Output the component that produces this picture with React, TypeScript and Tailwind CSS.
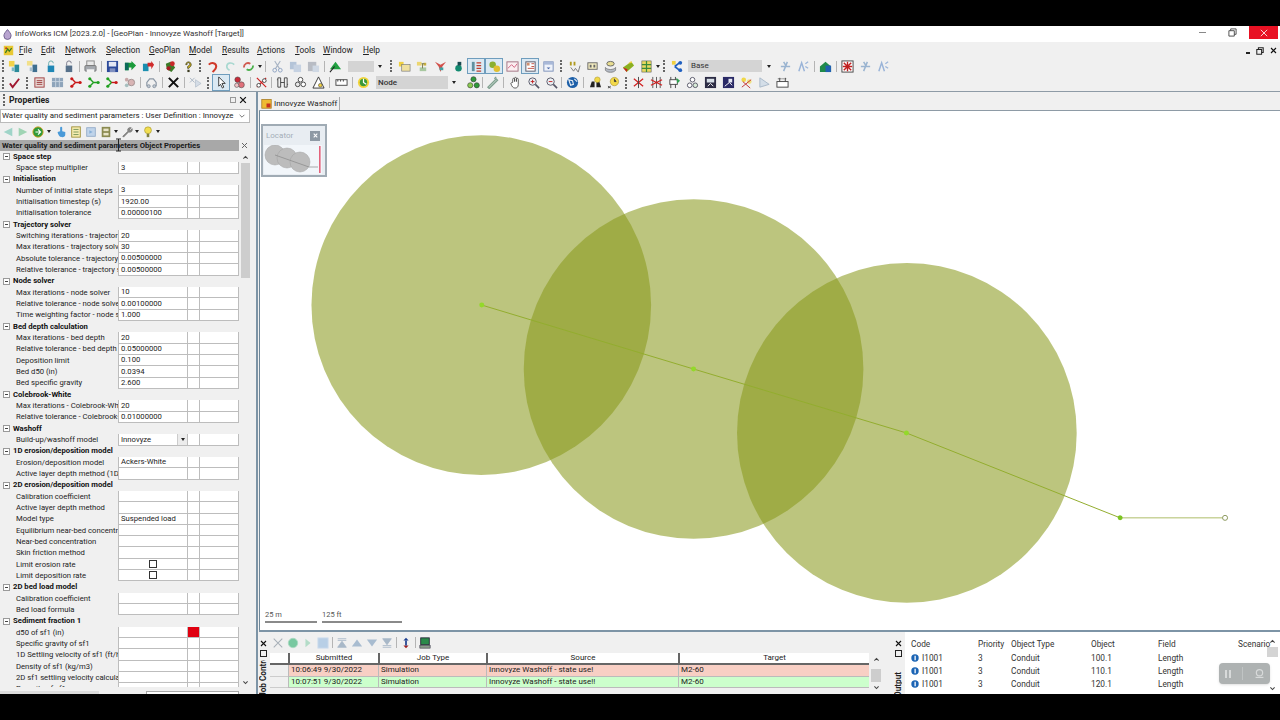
import type { ReactNode } from "react";

// toolbar glyphs, all drawn in a 14x14 box
const glyphs: Record<string, ReactNode> = {
  app: (<><rect x="1" y="1" width="12" height="12" fill="#e8c832" /><path d="M3 10l3-5 2 3 3-4" stroke="#3a7a20" strokeWidth="1.6" fill="none" /><circle cx="4" cy="4" r="1.2" fill="#c03020" /></>),
  new1: (<><rect x="1" y="1" width="6" height="6" fill="#f2d24a" /><rect x="7" y="5" width="5" height="8" fill="#2a8a9a" /><rect x="4" y="8" width="3" height="4" fill="#7ab8c4" /></>),
  new2: (<><rect x="1" y="1" width="6" height="5" fill="#f2e08a" /><rect x="7" y="5" width="5" height="8" fill="#3f6f8f" /><rect x="4" y="8" width="3" height="4" fill="#a8c0cc" /></>),
  lock1: (<><path d="M5 6V3.5a2.5 2.5 0 0 1 5 0" stroke="#6aa" fill="none" /><rect x="4" y="6" width="7" height="7" fill="#1f87b5" /></>),
  lock2: (<><path d="M5 6V3.5a2.5 2.5 0 0 1 5 0" stroke="#778" fill="none" /><rect x="4" y="6" width="7" height="7" fill="#56708a" /></>),
  print: (<><rect x="3" y="1" width="8" height="5" fill="#e8e8e8" stroke="#888" /><rect x="1" y="6" width="12" height="6" rx="1" fill="#a4a8ae" stroke="#777" /><rect x="3" y="10" width="8" height="3" fill="#f4f4f4" /></>),
  save: (<><rect x="1" y="1" width="12" height="12" fill="#2c4a9a" /><rect x="3" y="2" width="8" height="5" fill="#e4e8f4" /><rect x="4" y="9" width="6" height="4" fill="#8090c0" /></>),
  arrowG: (<><path d="M1 3h7V1l5 5-5 5V8H5v3H1z" fill="#1a9a3a" /><rect x="1" y="3" width="4" height="8" fill="#0d6a5a" /></>),
  arrowR: (<><rect x="1" y="4" width="6" height="8" fill="#1b8fb0" /><path d="M6 3h4V1l3 4-3 5V7H6z" fill="#d02a2a" /></>),
  bug: (<><path d="M2 4l5-2 5 6-4 5-5-3z" fill="#3c7a28" /><circle cx="9" cy="4" r="2.6" fill="#c8282a" /><circle cx="5" cy="9" r="2.2" fill="#a81c24" /></>),
  help: (<><path d="M4 5a3 3 0 1 1 4.500 2.600L7.500 9H6V7l2-1.500A1.500 1.500 0 1 0 5.500 5z" fill="#c9b020" stroke="#3a3a20" strokeWidth=".7" /><rect x="5.800" y="10.500" width="2.400" height="2.500" fill="#3a3a20" /></>),
  undo: (<path d="M3 5c3-3 8-2 8 2 0 3-2 4-4 6" stroke="#d03a2a" strokeWidth="2.200" fill="none" />),
  redo: (<path d="M11 5C8 2 3 3 3 7c0 2 1 3 3 4" stroke="#a8d8d0" strokeWidth="1.800" fill="none" />),
  refresh: (<><path d="M2 8c0-4 4-6 7-4" stroke="#d05a50" strokeWidth="2" fill="none" /><path d="M12 6c0 4-4 6-7 4" stroke="#4ab04a" strokeWidth="2" fill="none" /></>),
  cut: (<><path d="M4 1l5 8M10 1L5 9" stroke="#a8b4c4" strokeWidth="1.200" /><circle cx="4" cy="11" r="2" fill="none" stroke="#8aa0c0" /><circle cx="10" cy="11" r="2" fill="none" stroke="#8aa0c0" /></>),
  copy: (<><rect x="1" y="2" width="7" height="8" fill="#b4c4d8" /><rect x="5" y="5" width="8" height="8" fill="#c6d2e2" /></>),
  paste: (<><rect x="1" y="2" width="9" height="10" fill="#b8bcc4" /><rect x="6" y="6" width="7" height="7" fill="#cfd8e4" /></>),
  up: (<><path d="M7 2l6 8H1z" fill="#20a040" /><path d="M1 13l5-6" stroke="#222" strokeWidth="1.200" /></>),
  folder: (<><rect x="1" y="2" width="5" height="5" fill="#f0d040" /><rect x="4" y="5" width="9" height="7" fill="#efe0a0" stroke="#777" strokeWidth=".7" /></>),
  tree: (<><rect x="1" y="2" width="5" height="4" fill="#ecd670" /><rect x="8" y="3" width="3" height="3" fill="#c8b040" /><rect x="4" y="8" width="7" height="4" fill="#a8c8a0" /><path d="M6 4h3M7 4v5" stroke="#7a7a50" /></>),
  tree2: (<><path d="M1 2l6 3 6-3-4 5-2 6-2-6z" fill="#d2504a" /><rect x="6" y="8" width="4" height="3" fill="#40a0a0" /></>),
  flask: (<><circle cx="7" cy="9" r="3.500" fill="#128a70" /><rect x="6" y="2" width="4" height="4" fill="#1a4a50" /></>),
  list: (<><rect x="2" y="2" width="3" height="10" fill="#6090a0" /><path d="M7 3h5M7 6h5M7 9h5M7 12h5" stroke="#c04030" strokeWidth="1.300" /></>),
  geo: (<><circle cx="5" cy="5" r="3.500" fill="#8ab030" /><circle cx="9.500" cy="9.500" r="3.500" fill="#e0c030" /></>),
  chart: (<><rect x="1" y="2" width="12" height="10" fill="#fbeef0" stroke="#a07080" /><path d="M2 9l4-4 3 3 3-4" stroke="#d06080" fill="none" /></>),
  grid: (<><rect x="2" y="2" width="10" height="10" fill="#fff" stroke="#556" /><rect x="3" y="3" width="3" height="3" fill="#d09070" /><path d="M8 4h3M8 7h3M4 9h7" stroke="#c05040" /></>),
  win: (<><rect x="2" y="2" width="10" height="10" fill="#eef2fa" stroke="#7a8fb8" /><rect x="2" y="2" width="10" height="3" fill="#a8b8d8" /><path d="M5 8h4l-2 2z" fill="#4a68a8" /></>),
  abc: (<><path d="M2 2h2v4H2zM6 2h2v4H6z" fill="#b09a20" /><path d="M3 8l3 4 2-3 3 4 2-7" stroke="#777" fill="none" /></>),
  abd: (<><rect x="2" y="3" width="10" height="7" fill="#f3ecc0" stroke="#666" /><path d="M4 5h2v3H4zM8 5h2v3H8z" fill="#666" /></>),
  stack: (<><ellipse cx="7" cy="4" rx="4" ry="2.500" fill="#e8dd90" stroke="#666" /><path d="M1.500 8c2 3 9 3 11 0v3c-2 3-9 3-11 0z" fill="#b4bac4" stroke="#666" strokeWidth=".7" /></>),
  book: (<><path d="M1 8l9-6 3 4-8 7z" fill="#8bb020" /><path d="M1 8l4 5 1-3z" fill="#c82020" /><path d="M6 4l4-3 1 2z" fill="#f0d040" /></>),
  table: (<><rect x="2" y="1" width="10" height="12" fill="#e8d860" stroke="#555" strokeWidth=".6" /><path d="M2 5h10M2 9h10M7 1v12" stroke="#3a8a3a" strokeWidth="1.300" /></>),
  net: (<><rect x="1" y="1" width="4" height="4" fill="#f0d040" /><path d="M4 7l5-4M4 7l5 4" stroke="#2060c0" strokeWidth="1.800" /><circle cx="10" cy="3" r="2" fill="#2060c0" /><circle cx="10" cy="11" r="2" fill="#2060c0" /></>),
  faded1: (<path d="M2 7h10M9 2L5 12M5 2l3 5" stroke="#9ab4d0" strokeWidth="1.600" fill="none" />),
  faded2: (<><path d="M2 12L5 3l3 9" stroke="#9ab4d8" strokeWidth="1.600" fill="none" /><path d="M9 4l3-2M9 7l3 2" stroke="#9ab4d8" strokeWidth="1.300" /></>),
  gb: (<><path d="M1 13V7l6-5 6 5v6z" fill="#1f8a4a" /><rect x="7" y="6" width="6" height="7" fill="#2060b0" /></>),
  redgrid: (<><rect x="1" y="1" width="12" height="12" fill="#fff" stroke="#444" /><path d="M3 3l8 8M11 3l-8 8M7 2v10M2 7h10" stroke="#c02020" strokeWidth="1.500" /></>),
  check: (<path d="M2 8l3 4 7-9" stroke="#a01830" strokeWidth="2" fill="none" />),
  sum: (<><rect x="2" y="2" width="10" height="10" fill="#e8d8d4" stroke="#a04040" /><path d="M4 5h6M4 7h6M4 9h6" stroke="#a04040" /></>),
  cols: (<><rect x="1" y="2" width="12" height="10" fill="#8ea4ba" /><path d="M5 2v10M9 2v10M1 6h12" stroke="#c8d4e0" /></>),
  nodeR: (<><path d="M3 3l4 4-4 4M7 7h5" stroke="#c81818" strokeWidth="1.500" fill="none" /><circle cx="3" cy="3" r="1.700" fill="#c81818" /><circle cx="3" cy="11" r="1.700" fill="#c81818" /><circle cx="12" cy="7" r="1.700" fill="#c81818" /></>),
  nodeG: (<><path d="M3 3l4 4-4 4M7 7h5" stroke="#20a020" strokeWidth="1.500" fill="none" /><circle cx="3" cy="3" r="1.700" fill="#20a020" /><circle cx="3" cy="11" r="1.700" fill="#20a020" /><circle cx="12" cy="7" r="1.700" fill="#20a020" /></>),
  nodeM: (<><path d="M3 3l4 4-4 4" stroke="#20a020" strokeWidth="1.500" fill="none" /><path d="M7 7h5" stroke="#c81818" strokeWidth="1.500" /><circle cx="3" cy="3" r="1.700" fill="#20a020" /><circle cx="3" cy="11" r="1.700" fill="#20a020" /><circle cx="12" cy="7" r="1.700" fill="#c81818" /></>),
  nodeF: (<><circle cx="4" cy="4" r="2" fill="#c8a8a8" /><circle cx="4" cy="10" r="2" fill="#a8c0c0" /><circle cx="9" cy="7" r="3.500" fill="#d8b4b4" stroke="#a09090" /></>),
  car: (<><path d="M2 11V7l3-4h4l3 4v4" stroke="#8a96a4" strokeWidth="1.300" fill="none" /><circle cx="4" cy="11" r="1.600" fill="#c0c8d0" stroke="#8a96a4" /><circle cx="10" cy="11" r="1.600" fill="#c0c8d0" stroke="#8a96a4" /></>),
  cross: (<path d="M2 2l10 10M12 2L2 12" stroke="#111" strokeWidth="2.200" />),
  crossF: (<><path d="M1 2l5 5M6 2L1 7" stroke="#a8b4c4" /><path d="M7 4l6 4-6 4z" fill="#d4dce6" stroke="#a8b4c4" strokeWidth=".6" /></>),
  pointer: (<path d="M4 1l7 7H7.500l2 4-1.500 1-2-4L4 11z" fill="#fff" stroke="#222" strokeWidth=".9" />),
  nodes: (<><circle cx="5" cy="4" r="3" fill="#c82a38" stroke="#444" strokeWidth=".6" /><circle cx="9" cy="9.500" r="3.200" fill="#e0707a" stroke="#444" strokeWidth=".6" /><circle cx="4" cy="10" r="2.300" fill="#f0c0c4" stroke="#444" strokeWidth=".6" /></>),
  xnet: (<><path d="M2 2l10 10M12 2L2 12" stroke="#d02020" strokeWidth="1.300" /><circle cx="4" cy="10" r="2" fill="#fff" stroke="#444" /><circle cx="10" cy="5" r="2" fill="#fff" stroke="#444" /></>),
  pipes: (<path d="M2 2v10h3V2zM9 2v10h3V2zM5 7h4M1 4h1M12 9h1" fill="none" stroke="#444" />),
  tri3: (<><circle cx="7" cy="4" r="2.500" fill="#fff" stroke="#444" /><circle cx="4" cy="9" r="2.500" fill="#e8e8e8" stroke="#444" /><circle cx="10" cy="9" r="2.500" fill="#fff" stroke="#444" /></>),
  tri: (<><path d="M7 1l6 12H1z" fill="#fff" stroke="#333" /><circle cx="9" cy="10" r="2" fill="#f0d040" stroke="#444" strokeWidth=".6" /></>),
  ruler: (<><rect x="1" y="4" width="12" height="6" fill="#fff" stroke="#444" /><path d="M3 4v2M6 4v2M9 4v2" stroke="#444" /></>),
  globeG: (<><circle cx="7" cy="7" r="6" fill="#f3d43a" /><circle cx="7" cy="7" r="4" fill="#3a9a3a" /><path d="M7 3v4l3 2" stroke="#fff" strokeWidth="1.300" fill="none" /></>),
  green3: (<><circle cx="7" cy="3.500" r="2.800" fill="#2f9a3a" stroke="#333" strokeWidth=".6" /><circle cx="3.500" cy="10" r="2.800" fill="#8acc50" stroke="#333" strokeWidth=".6" /><circle cx="10.500" cy="10" r="2.800" fill="#2f9a3a" stroke="#333" strokeWidth=".6" /></>),
  pen: (<path d="M2 12l9-9 1.500 1.500-9 9zM9 3l2-2" stroke="#80a090" strokeWidth="1.300" fill="#c0d4c8" />),
  hand: (<path d="M4 7V3.500a1 1 0 0 1 2 0V6V2.500a1 1 0 0 1 2 0V6V3.500a1 1 0 0 1 2 0V9c0 3-1.500 4-3.500 4S3 11.500 2 8c.3-1 1.500-1 2-1z" fill="#fff" stroke="#444" strokeWidth=".9" />),
  zoomIn: (<><circle cx="6" cy="6" r="4" fill="#eaf0f4" stroke="#556" /><path d="M4 6h4M6 4v4" stroke="#c02020" /><path d="M9 9l4 4" stroke="#556" strokeWidth="1.800" /></>),
  zoomOut: (<><circle cx="6" cy="6" r="4" fill="#eaf0f4" stroke="#556" /><path d="M4 6h4" stroke="#c02020" /><path d="M9 9l4 4" stroke="#556" strokeWidth="1.800" /></>),
  globe: (<><circle cx="7" cy="7" r="6" fill="#1d5fa8" /><path d="M3 4l4 1 1 4-3 1zM9 3l3 3" stroke="#e8eef4" strokeWidth="1.200" fill="none" /></>),
  bino: (<><path d="M1 12l2-6h3v6zM8 12V6h3l2 6z" fill="#222" /><circle cx="9" cy="4" r="3" fill="#f0d848" stroke="#a08a20" strokeWidth=".5" /></>),
  clock: (<><path d="M1 11l3 2M4 11l-3 2" stroke="#444" /><circle cx="8" cy="6" r="4.500" fill="#f3d94a" stroke="#a08a20" strokeWidth=".6" /><path d="M8 3v3h2" stroke="#444" /></>),
  xa: (<><path d="M2 3l10 8M12 3L2 11" stroke="#d02020" strokeWidth="1.300" /><path d="M7 1v12" stroke="#444" /></>),
  xb: (<><path d="M3 1v12M7 1v12M11 1v12" stroke="#444" strokeWidth=".9" /><path d="M1 4l12 6M13 4L1 10" stroke="#d02020" strokeWidth="1.300" /></>),
  gb2: (<><path d="M3 1v12M8 1v12" stroke="#444" /><rect x="2" y="4" width="8" height="5" fill="#fff" stroke="#444" /><path d="M9 2l4 3-3 3" fill="#30a050" /></>),
  tri2: (<><circle cx="7" cy="4" r="2.500" fill="#fff" stroke="#556" /><circle cx="4" cy="10" r="2.500" fill="#fff" stroke="#556" /><circle cx="10" cy="10" r="2.500" fill="#d8ecd8" stroke="#556" /></>),
  boxA: (<><rect x="1" y="1" width="12" height="12" fill="#2c2c44" /><rect x="3" y="3" width="8" height="4" fill="#d8e0e8" /><path d="M4 11l3-3 3 3" stroke="#fff" fill="none" /></>),
  boxB: (<><rect x="1" y="1" width="12" height="12" fill="#2a2a66" /><rect x="7" y="3" width="4" height="4" fill="#e8eaf4" /><path d="M3 11l5-4 3 3" stroke="#fff" fill="none" /></>),
  yx: (<><circle cx="4" cy="4" r="2.500" fill="#f0d848" /><circle cx="10" cy="6" r="2.500" fill="#f0e080" /><path d="M2 12l10-8M3 6l8 7" stroke="#c03030" /></>),
  triF: (<path d="M2 2v10l10-3z" fill="#d4dee8" stroke="#a8b8c8" />),
  ruler2: (<><rect x="1" y="6" width="12" height="6" fill="#fff" stroke="#444" /><path d="M4 2v4M10 2v4" stroke="#444" /><path d="M2 3h10" stroke="#444" strokeDasharray="1 1" /></>),
  triL: (<path d="M12 2v10L2 7z" fill="#9fd4c8" />),
  triR: (<path d="M2 2v10l10-5z" fill="#9fd4b4" />),
  circG: (<><circle cx="7" cy="7" r="6" fill="#2f9a3a" stroke="#d8a020" /><path d="M4 7h6M7 4l3 3-3 3" stroke="#fff" strokeWidth="1.300" fill="none" /></>),
  handB: (<path d="M3 7l3-1V2a1.200 1.200 0 0 1 2.400 0v4l3.600 1v3c0 2-1.500 3-3.500 3S4 12 3 7z" fill="#4a9ad8" />),
  doc: (<><rect x="2" y="1" width="10" height="12" fill="#f6edb0" stroke="#9a8a30" /><path d="M4 4h6M4 7h6M4 10h6" stroke="#6a8a50" /></>),
  docB: (<><rect x="2" y="2" width="10" height="10" fill="#c0d4ea" stroke="#90a8c8" /><path d="M5 5l4 2-4 2z" fill="#8ab0d8" /></>),
  film: (<><rect x="2" y="1" width="10" height="12" fill="#8a8a50" /><rect x="4" y="3" width="6" height="3" fill="#e8e4c8" /><rect x="4" y="8" width="6" height="3" fill="#e8e4c8" /></>),
  wrench: (<path d="M2 12l6-6a3 3 0 0 1 4-4L10 4l1 1 2-2a3 3 0 0 1-4 4l-6 6z" fill="#8a8a88" stroke="#555" strokeWidth=".5" />),
  bulb: (<><circle cx="7" cy="5" r="4" fill="#f2de50" stroke="#a09028" strokeWidth=".7" /><rect x="5.500" y="9" width="3" height="4" fill="#808040" /></>),
  xF: (<path d="M2 2l10 10M12 2L2 12" stroke="#a8b0b8" strokeWidth="1.200" />),
  dotG: (<circle cx="7" cy="7" r="5.500" fill="#78c8a0" stroke="#a8d8c0" />),
  playF: (<path d="M4 2v10l6-5z" fill="#b4dcc8" />),
  boxF: (<rect x="1" y="1" width="12" height="12" fill="#b8cfe6" stroke="#d0deee" />),
  top: (<path d="M2 2h10M2 4h10M7 5l5 7H2z" stroke="#a8b8c8" fill="#a8b8c8" />),
  upF: (<path d="M7 3l6 8H1z" fill="#a8bcd0" />),
  downF: (<path d="M7 11l6-8H1z" fill="#a8bcd0" />),
  bottom: (<path d="M2 12h10M2 10h10M7 9l5-7H2z" stroke="#a8b8c8" fill="#a8b8c8" />),
  sync: (<><path d="M7 1l3 3H4z" fill="#1d3f90" /><path d="M7 13l3-3H4z" fill="#a02020" /><rect x="6" y="4" width="2" height="6" fill="#1d3f90" /></>),
  pc: (<><rect x="2" y="1" width="10" height="8" fill="#2a8a4a" stroke="#223" /><rect x="1" y="10" width="12" height="3" fill="#8a9a8a" stroke="#223" strokeWidth=".6" /></>),
};

function Icon({ n, selected }: { n: string; selected?: boolean }) {
  return (
    <div className={`flex h-full w-[18px] shrink-0 items-center justify-center ${selected ? "border border-[#6f9dbd] bg-[#dbe9f3]" : ""}`}>
      <svg width="13" height="13" viewBox="0 0 14 14">{glyphs[n]}</svg>
    </div>
  );
}

function SmallIcon({ n }: { n: string }) {
  return (
    <div className="flex h-full w-[15px] shrink-0 items-center justify-center">
      <svg width="12" height="12" viewBox="0 0 14 14">{glyphs[n]}</svg>
    </div>
  );
}

function Grip({ className }: { className: string }) {
  return (
    <div className={`flex h-full shrink-0 items-center justify-center ${className}`}>
      <div className="h-[12px] border-l-2 border-dotted border-[#666]" />
    </div>
  );
}

function Sep({ className }: { className: string }) {
  return (
    <div className={`flex h-full shrink-0 items-center justify-center ${className}`}>
      <div className="h-[11px] w-px bg-[#b4b4b4]" />
    </div>
  );
}

function Drop({ className }: { className: string }) {
  return (
    <div className={`flex h-full shrink-0 items-center justify-center ${className}`}>
      <div className="h-0 w-0 border-x-[2.500px] border-t-[3px] border-x-transparent border-t-[#222]" />
    </div>
  );
}

type Row = { label: string; section?: boolean; value?: string; kind?: "combo" | "check" | "flag" };

const rows: Row[] = [
  { label: "Space step", section: true },
  { label: "Space step multiplier", value: "3" },
  { label: "Initialisation", section: true },
  { label: "Number of initial state steps", value: "3" },
  { label: "Initialisation timestep (s)", value: "1920.00" },
  { label: "Initialisation tolerance", value: "0.00000100" },
  { label: "Trajectory solver", section: true },
  { label: "Switching iterations - trajectory solver", value: "20" },
  { label: "Max iterations - trajectory solver", value: "30" },
  { label: "Absolute tolerance - trajectory solver", value: "0.00500000" },
  { label: "Relative tolerance - trajectory solver", value: "0.00500000" },
  { label: "Node solver", section: true },
  { label: "Max iterations - node solver", value: "10" },
  { label: "Relative tolerance - node solver", value: "0.00100000" },
  { label: "Time weighting factor - node solver", value: "1.000" },
  { label: "Bed depth calculation", section: true },
  { label: "Max iterations - bed depth", value: "20" },
  { label: "Relative tolerance - bed depth", value: "0.05000000" },
  { label: "Deposition limit", value: "0.100" },
  { label: "Bed d50 (in)", value: "0.0394" },
  { label: "Bed specific gravity", value: "2.600" },
  { label: "Colebrook-White", section: true },
  { label: "Max iterations - Colebrook-White", value: "20" },
  { label: "Relative tolerance - Colebrook-White", value: "0.01000000" },
  { label: "Washoff", section: true },
  { label: "Build-up/washoff model", value: "Innovyze", kind: "combo" },
  { label: "1D erosion/deposition model", section: true },
  { label: "Erosion/deposition model", value: "Ackers-White" },
  { label: "Active layer depth method (1D)" },
  { label: "2D erosion/deposition model", section: true },
  { label: "Calibration coefficient" },
  { label: "Active layer depth method" },
  { label: "Model type", value: "Suspended load" },
  { label: "Equilibrium near-bed concentration" },
  { label: "Near-bed concentration" },
  { label: "Skin friction method" },
  { label: "Limit erosion rate", kind: "check" },
  { label: "Limit deposition rate", kind: "check" },
  { label: "2D bed load model", section: true },
  { label: "Calibration coefficient" },
  { label: "Bed load formula" },
  { label: "Sediment fraction 1", section: true },
  { label: "d50 of sf1 (in)", kind: "flag" },
  { label: "Specific gravity of sf1" },
  { label: "1D Settling velocity of sf1 (ft/hr)" },
  { label: "Density of sf1 (kg/m3)" },
  { label: "2D sf1 settling velocity calculation" },
  { label: "Porosity of sf1" },
];

function PropertyRow({ row, first }: { row: Row; first: boolean }) {
  if (row.section) {
    return (
      <div className="flex h-[11.33px] items-center">
        <div className="ml-[3px] flex h-[7px] w-[7px] items-center justify-center border border-[#9a9a9a] bg-white">
          <div className="h-px w-[3px] bg-[#444]" />
        </div>
        <span className="ml-[3px] font-bold leading-none text-[#111]">{row.label}</span>
      </div>
    );
  }
  return (
    <div className={`grid h-[11.33px] grid-cols-[118px_69px_12px_40px] items-stretch leading-none ${first ? "shadow-[inset_0_1px_0_#b0b0b0]" : ""}`}>
      <div className="flex items-center overflow-hidden whitespace-nowrap bg-[#f0f0f0] pl-4 text-[#222]">{row.label}</div>
      <div className="flex items-center border-b border-l border-[#bdbdbd] bg-white pl-[2px] text-[#222]">
        {row.kind === "combo" ? (
          <div className="flex h-full w-full items-center justify-between">
            <span>{row.value}</span>
            <div className="flex h-full w-[10px] items-center justify-center border-l border-[#ccc] bg-[#ececec]">
              <div className="h-0 w-0 border-x-[2.500px] border-t-[3px] border-x-transparent border-t-[#222]" />
            </div>
          </div>
        ) : row.kind === "check" ? (
          <div className="ml-[28px] h-[8px] w-[8px] border border-[#333] bg-white" />
        ) : (
          row.value
        )}
      </div>
      <div className={`border-b border-l border-[#bdbdbd] ${row.kind === "flag" ? "bg-[#e00010]" : "bg-white"}`} />
      <div className="border-x border-b border-[#bdbdbd] bg-white" />
    </div>
  );
}

function Properties() {
  return (
    <div className="flex w-[256px] shrink-0 flex-col overflow-hidden bg-[#f0f0f0]">
      <div className="flex h-[16px] shrink-0 items-center">
        <Grip className="w-[8px]" />
        <span className="ml-px text-[8.600px] font-bold text-[#222]">Properties</span>
        <div className="ml-auto mr-[3px] h-[6px] w-[6px] border border-[#999]" />
        <svg width="8" height="8" viewBox="0 0 14 14" className="mr-[9px]">{glyphs.cross}</svg>
      </div>
      <div className="mt-px flex h-[14px] w-[250px] shrink-0 items-center justify-between border border-[#bbb] bg-white pl-px pr-[3px] text-[7.900px] text-[#222]">
        <span className="whitespace-nowrap">Water quality and sediment parameters : User Definition : Innovyze</span>
        <svg width="8" height="8" viewBox="0 0 10 10"><path d="M2 3.500l3 3 3-3" stroke="#555" fill="none" /></svg>
      </div>
      <div className="flex h-[17px] shrink-0 items-center">
        <SmallIcon n="triL" />
        <SmallIcon n="triR" />
        <SmallIcon n="circG" />
        <Drop className="w-[8px]" />
        <SmallIcon n="handB" />
        <SmallIcon n="doc" />
        <SmallIcon n="docB" />
        <SmallIcon n="film" />
        <Drop className="w-[6px]" />
        <SmallIcon n="wrench" />
        <Drop className="w-[6px]" />
        <SmallIcon n="bulb" />
        <Drop className="w-[5px]" />
      </div>
      <div className="flex h-[11px] shrink-0 items-center">
        <div className="relative flex h-full w-[239px] items-center whitespace-nowrap bg-[#a8a8a8] pl-[2px] text-[7.700px] font-bold text-[#1a1a1a]">
          Water quality and sediment parameters Object Properties
          {/* mouse cursor caught over the title */}
          <svg width="7" height="14" viewBox="0 0 7 14" className="absolute left-[115px] top-[-2px]">
            <path d="M1 1h5M3.500 1v12M1 13h5" stroke="#222" />
          </svg>
        </div>
        <svg width="7" height="7" viewBox="0 0 14 14" className="ml-[2px]"><path d="M2 2l10 10M12 2L2 12" stroke="#666" strokeWidth="2" /></svg>
      </div>
      <div className="flex min-h-0 flex-1 overflow-hidden">
        <div className="w-[239px] shrink-0 text-[7.700px]">
          {rows.map((row, i) => (
            <PropertyRow key={i} row={row} first={i > 0 && !!rows[i - 1].section} />
          ))}
        </div>
        <div className="ml-[2px] flex w-[9px] shrink-0 flex-col items-center">
          <svg width="7" height="7" viewBox="0 0 10 10" className="mt-[3px] shrink-0"><path d="M2 6.500l3-3 3 3" stroke="#444" fill="none" strokeWidth="1.500" /></svg>
          <div className="mt-[2px] h-[115px] w-full shrink-0 bg-[#cdcdcd]" />
          <div className="flex-1" />
          <svg width="7" height="7" viewBox="0 0 10 10" className="mb-[1px] shrink-0"><path d="M2 3.500l3 3 3-3" stroke="#444" fill="none" strokeWidth="1.500" /></svg>
        </div>
      </div>
      <div className="flex h-[7px] shrink-0 items-end">
        <div className="h-[3px] w-[99px] bg-[#dcdcdc]" />
        <div className="ml-[47px] h-[3px] w-[93px] border-x border-t border-[#a8a8a8] bg-white" />
      </div>
    </div>
  );
}

function GeoPlan() {
  return (
    <div className="relative h-[519px] shrink-0 border-l border-[#6f8798] bg-white">
      <svg className="absolute inset-0 h-full w-full" viewBox="259 111 1021 519">
        <g fill="#8a991d" fillOpacity="0.57">
          <circle cx="480.500" cy="305" r="170" />
          <circle cx="693" cy="369" r="170" />
          <circle cx="906.500" cy="433" r="170" />
        </g>
        <path d="M481 305L693 369L906 433L1120 518" stroke="#93ad2e" strokeWidth="1" fill="none" />
        <path d="M1120 518H1225" stroke="#aebd68" strokeWidth="1" fill="none" />
        <circle cx="481" cy="305" r="2.500" fill="#93d92a" />
        <circle cx="693" cy="369" r="2.500" fill="#93d92a" />
        <circle cx="906" cy="433" r="2.500" fill="#93d92a" />
        <circle cx="1120" cy="518" r="2.500" fill="#7cc422" />
        <circle cx="1225" cy="518" r="2.500" fill="#fff" stroke="#8e9a60" />
      </svg>
      <div className="absolute left-px top-[13px] h-[53px] w-[66px] border-2 border-[#a0abb4] bg-[#e8edf2]">
        <div className="flex h-[19px] items-center justify-between pl-[3px] pr-[5px]">
          <span className="text-[8px] text-[#a4aeb8]">Locator</span>
          <div className="flex h-[10px] w-[10px] items-center justify-center bg-[#8e99a4]">
            <svg width="5" height="5" viewBox="0 0 14 14"><path d="M2 2l10 10M12 2L2 12" stroke="#fff" strokeWidth="3" /></svg>
          </div>
        </div>
        <svg width="58" height="29" viewBox="265 145 58 29" className="ml-[1px] bg-[#f2f6fa]">
          <g fill="#bcbcbc" stroke="#a0a0a0" strokeWidth=".5">
            <circle cx="276" cy="155" r="10" />
            <circle cx="288" cy="158" r="10" />
            <circle cx="301" cy="162" r="10" />
          </g>
          <path d="M276 155L310 167H319" stroke="#888" fill="none" strokeWidth=".7" />
          <rect x="320" y="146" width="1.600" height="27" fill="#e4637c" />
        </svg>
      </div>
      <div className="absolute bottom-[7px] left-[5px] flex gap-[5px] text-[7.500px] leading-none text-[#555]">
        <div className="w-[52px] border-b-2 border-[#8a8a8a] pb-[3px]">25 m</div>
        <div className="w-[80px] border-b-2 border-[#8a8a8a] pb-[3px]">125 ft</div>
      </div>
    </div>
  );
}

const jobs = [
  { time: "10:06:49 9/30/2022", source: "Innovyze Washoff - state use!", bg: "bg-[#f8cfc4]" },
  { time: "10:07:51 9/30/2022", source: "Innovyze Washoff - state use!!", bg: "bg-[#ccffcc]" },
];

function SideTab({ label, className }: { label: string; className: string }) {
  return (
    <div className={`flex h-[80px] shrink-0 flex-col items-center gap-[3px] overflow-hidden pt-[8px] ${className}`}>
      <svg width="7" height="7" viewBox="0 0 14 14" className="shrink-0">{glyphs.cross}</svg>
      <div className="h-[7px] w-[7px] shrink-0 border border-[#222]" />
      {/* the label reads upward from below the panel edge, its far end runs under the buttons */}
      <div className="flex h-[37px] shrink-0 flex-col justify-end overflow-hidden">
        <span className="shrink-0 rotate-180 whitespace-nowrap text-[8.200px] font-bold leading-none text-[#222] [writing-mode:vertical-rl]">{label}</span>
      </div>
    </div>
  );
}

function JobControl() {
  return (
    <div className="flex w-[629px] shrink-0 overflow-hidden">
      <SideTab label="Job Control" className="w-[9px]" />
      <div className="ml-[2px] flex min-w-0 flex-1 flex-col">
        <div className="flex h-[21px] shrink-0 items-center">
          <SmallIcon n="xF" />
          <SmallIcon n="dotG" />
          <SmallIcon n="playF" />
          <SmallIcon n="boxF" />
          <Sep className="w-[4px]" />
          <SmallIcon n="top" />
          <SmallIcon n="upF" />
          <SmallIcon n="downF" />
          <SmallIcon n="bottom" />
          <Sep className="w-[4px]" />
          <SmallIcon n="sync" />
          <Sep className="w-[4px]" />
          <SmallIcon n="pc" />
        </div>
        <div className="flex min-h-0 flex-1">
          <div className="w-[599px] shrink-0 text-[8px] leading-none text-[#222]">
            <div className="grid h-[12px] grid-cols-[18px_90px_108px_192px_191px] border-b-2 border-[#666] bg-white text-center">
              <div />
              <div className="flex items-center justify-center border-l-2 border-[#666]">Submitted</div>
              <div className="flex items-center justify-center border-l-2 border-[#666]">Job Type</div>
              <div className="flex items-center justify-center border-l-2 border-[#666]">Source</div>
              <div className="flex items-center justify-center border-l-2 border-[#666]">Target</div>
            </div>
            {jobs.map((job) => (
              <div key={job.time} className="grid h-[11.500px] grid-cols-[18px_90px_108px_192px_191px]">
                <div className="border-b border-[#ccc] bg-[#f0f0f0]" />
                <div className={`flex items-center border-b border-l border-[#bbb] pl-[2px] ${job.bg}`}>{job.time}</div>
                <div className={`flex items-center border-b border-l border-[#bbb] pl-[2px] ${job.bg}`}>Simulation</div>
                <div className={`flex items-center border-b border-l border-[#bbb] pl-[2px] ${job.bg}`}>{job.source}</div>
                <div className={`flex items-center border-b border-l border-[#bbb] pl-[2px] ${job.bg}`}>M2-60</div>
              </div>
            ))}
          </div>
          <div className="ml-[2px] flex w-[10px] flex-col items-center">
            <svg width="7" height="7" viewBox="0 0 10 10" className="mt-[3px] shrink-0"><path d="M2 6.500l3-3 3 3" stroke="#444" fill="none" strokeWidth="1.500" /></svg>
            <div className="mt-[6px] h-[13px] w-full shrink-0 bg-[#cdcdcd]" />
            <svg width="7" height="7" viewBox="0 0 10 10" className="mt-[2px] shrink-0"><path d="M2 3.500l3 3 3-3" stroke="#444" fill="none" strokeWidth="1.500" /></svg>
          </div>
        </div>
      </div>
    </div>
  );
}

const outputRows = [
  { code: "I1001", priority: "3", type: "Conduit", object: "100.1", field: "Length" },
  { code: "I1001", priority: "3", type: "Conduit", object: "110.1", field: "Length" },
  { code: "I1001", priority: "3", type: "Conduit", object: "120.1", field: "Length" },
];

function Output() {
  return (
    <div className="relative flex min-w-0 flex-1 overflow-hidden">
      <div className="w-[3px] shrink-0" />
      <SideTab label="Output" className="w-[14px]" />
      <div className="flex min-w-0 flex-1 bg-white pt-[5px] text-[8.300px] leading-none text-[#333]">
        <div className="w-[361px] shrink-0">
          <div className="grid h-[15px] grid-cols-[67px_33px_80px_67px_80px_28px] items-center whitespace-nowrap pl-[6px]">
            <div>Code</div>
            <div>Priority</div>
            <div>Object Type</div>
            <div>Object</div>
            <div>Field</div>
            <div>Scenario</div>
          </div>
          {outputRows.map((r) => (
            <div key={r.object} className="grid h-[12.700px] grid-cols-[67px_33px_80px_67px_80px] items-center pl-[6px]">
              <div className="flex items-center gap-[3px]">
                <svg width="8" height="8" viewBox="0 0 14 14"><circle cx="7" cy="7" r="6.500" fill="#1b64b4" /><path d="M6 3h2.500v8H6z" fill="#e8f0fa" /></svg>
                <span>{r.code}</span>
              </div>
              <div>{r.priority}</div>
              <div>{r.type}</div>
              <div>{r.object}</div>
              <div>{r.field}</div>
            </div>
          ))}
        </div>
        <div className="ml-auto mr-[2px] flex w-[11px] shrink-0 flex-col items-center">
          <svg width="7" height="7" viewBox="0 0 10 10" className="mt-[1px] shrink-0"><path d="M2 6.500l3-3 3 3" stroke="#444" fill="none" strokeWidth="1.500" /></svg>
          <div className="mt-[2px] h-[10px] w-full shrink-0 bg-[#d4d4d4]" />
          <div className="flex-1" />
          <svg width="7" height="7" viewBox="0 0 10 10" className="mb-[2px] shrink-0"><path d="M2 3.500l3 3 3-3" stroke="#444" fill="none" strokeWidth="1.500" /></svg>
        </div>
      </div>
      {/* screen recorder's floating pause control */}
      <div className="absolute bottom-[10px] right-[10px] flex h-[21px] w-[51px] items-center justify-around rounded-[4px] bg-[#aeb2b2] shadow-sm">
        <div className="flex gap-[2px]">
          <div className="h-[8px] w-[2px] bg-[#d8dada]" />
          <div className="h-[8px] w-[2px] bg-[#d8dada]" />
        </div>
        <div className="h-[13px] w-px bg-[#c0c4c4]" />
        <svg width="11" height="11" viewBox="0 0 14 14"><circle cx="7" cy="6" r="4" stroke="#d8dada" strokeWidth="1.500" fill="none" /><path d="M2 12h10" stroke="#d8dada" strokeWidth="1.500" /></svg>
      </div>
    </div>
  );
}

const menus = [
  { key: "F", rest: "ile", cls: "w-[22px]" },
  { key: "E", rest: "dit", cls: "w-[24px]" },
  { key: "N", rest: "etwork", cls: "w-[41px]" },
  { key: "S", rest: "election", cls: "w-[43px]" },
  { key: "G", rest: "eoPlan", cls: "w-[40px]" },
  { key: "M", rest: "odel", cls: "w-[33px]" },
  { key: "R", rest: "esults", cls: "w-[35px]" },
  { key: "A", rest: "ctions", cls: "w-[38px]" },
  { key: "T", rest: "ools", cls: "w-[28px]" },
  { key: "W", rest: "indow", cls: "w-[40px]" },
  { key: "H", rest: "elp", cls: "w-[20px]" },
];

export default function App() {
  return (
    <div className="flex h-[720px] w-[1280px] flex-col overflow-hidden bg-black font-['Roboto',sans-serif]">
      <div className="h-[26px] shrink-0" />

      <div className="flex h-[668px] shrink-0 flex-col bg-[#f0f0f0]">
        {/* title bar */}
        <div className="flex h-[16px] shrink-0 items-center bg-white">
          <svg width="9" height="11" viewBox="0 0 10 12" className="ml-[3px]">
            <path d="M5 .5C7 3 9 5 9 7.500a4 4 0 0 1-8 0C1 5 3 3 5 .5z" fill="#b8a4d0" stroke="#6a5a8a" />
          </svg>
          <span className="ml-[3px] whitespace-nowrap text-[8px] text-[#333]">InfoWorks ICM [2023.2.0] - [GeoPlan - Innovyze Washoff [Target]]</span>
          <div className="ml-auto flex h-full items-start">
            <div className="flex h-[13px] w-[26px] items-center justify-center"><div className="h-px w-[7px] bg-[#888]" /></div>
            <div className="flex h-[13px] w-[34px] items-center justify-center">
              <svg width="9" height="9" viewBox="0 0 10 10"><path d="M1 3h6v6H1zM3 3V1h6v6H7" stroke="#444" fill="none" /></svg>
            </div>
            <div className="mr-[2px] flex h-[13px] w-[29px] items-center justify-center bg-[#e81123]">
              <svg width="8" height="8" viewBox="0 0 10 10"><path d="M1 1l8 8M9 1l-8 8" stroke="#fff" /></svg>
            </div>
          </div>
        </div>

        {/* menu bar */}
        <div className="flex h-[16px] shrink-0 items-center pt-px text-[8.300px] text-[#222]">
          <div className="flex w-[19px] shrink-0 justify-center pr-[3px]">
            <svg width="11" height="11" viewBox="0 0 14 14">{glyphs.app}</svg>
          </div>
          {menus.map((m) => (
            <div key={m.key} className={`shrink-0 ${m.cls}`}>
              <u>{m.key}</u>
              {m.rest}
            </div>
          ))}
          <div className="ml-auto mr-[3px] flex items-center gap-[6px]">
            <div className="mt-[5px] h-[2px] w-[4px] bg-[#222]" />
            <svg width="8" height="8" viewBox="0 0 10 10"><path d="M1 3h6v6H1zM3 3V1h6v6H7" stroke="#222" fill="none" strokeWidth="1.300" /></svg>
            <svg width="7" height="7" viewBox="0 0 14 14">{glyphs.cross}</svg>
          </div>
        </div>

        {/* upper toolbar */}
        <div className="flex h-[16px] shrink-0 items-center text-[8px] text-[#333]">
          <Grip className="w-[5px]" />
          <Icon n="new1" /><Icon n="new2" /><Icon n="lock1" /><Icon n="lock2" />
          <Sep className="w-[4px]" />
          <Icon n="print" />
          <Sep className="w-[4px]" />
          <Icon n="save" /><Icon n="arrowG" /><Icon n="arrowR" />
          <Sep className="w-[4px]" />
          <Icon n="bug" /><Icon n="help" />
          <Grip className="w-[6px]" />
          <Icon n="undo" /><Icon n="redo" /><Icon n="refresh" />
          <Drop className="w-[5px]" />
          <Sep className="w-[6px]" />
          <Icon n="cut" /><Icon n="copy" /><Icon n="paste" />
          <Sep className="w-[4px]" />
          <Icon n="up" />
          <div className="ml-[4px] h-[11px] w-[26px] shrink-0 bg-[#d4d4d4]" />
          <Drop className="w-[12px]" />
          <Grip className="w-[9px]" />
          <Icon n="folder" /><Icon n="tree" /><Icon n="tree2" /><Icon n="flask" />
          <Icon n="list" selected /><Icon n="geo" selected />
          <Icon n="chart" />
          <Icon n="grid" selected />
          <Icon n="win" />
          <Grip className="w-[8px]" />
          <Icon n="abc" /><Icon n="abd" /><Icon n="stack" /><Icon n="book" /><Icon n="table" />
          <Drop className="w-[5px]" />
          <Grip className="w-[8px]" />
          <Icon n="net" />
          <div className="ml-[2px] flex h-[12px] w-[74px] shrink-0 items-center bg-[#d4d4d4] pl-[3px]">Base</div>
          <Drop className="w-[14px]" />
          <Icon n="faded1" /><Icon n="faded2" />
          <Sep className="w-[4px]" />
          <Icon n="gb" />
          <Sep className="w-[4px]" />
          <Icon n="redgrid" /><Icon n="faded1" /><Icon n="faded2" />
        </div>

        {/* lower toolbar */}
        <div className="flex h-[17px] shrink-0 items-center text-[8px] text-[#333]">
          <Grip className="w-[5px]" />
          <Icon n="check" />
          <Grip className="w-[7px]" />
          <Icon n="sum" /><Icon n="cols" /><Icon n="nodeR" /><Icon n="nodeG" /><Icon n="nodeM" /><Icon n="nodeF" />
          <Sep className="w-[4px]" />
          <Icon n="car" />
          <Sep className="w-[4px]" />
          <Icon n="cross" />
          <Sep className="w-[4px]" />
          <Icon n="crossF" />
          <Grip className="w-[8px]" />
          <Icon n="pointer" selected /><Icon n="nodes" />
          <Sep className="w-[4px]" />
          <Icon n="xnet" />
          <Sep className="w-[3px]" />
          <Icon n="pipes" /><Icon n="tri3" /><Icon n="tri" />
          <Sep className="w-[5px]" />
          <Icon n="ruler" />
          <Sep className="w-[4px]" />
          <Icon n="globeG" />
          <div className="ml-[4px] flex h-[13px] w-[72px] shrink-0 items-center bg-[#d4d4d4] pl-[2px] font-medium">Node</div>
          <Drop className="w-[12px]" />
          <div className="w-[4px] shrink-0" />
          <Icon n="green3" />
          <Sep className="w-px" />
          <Icon n="pen" />
          <Sep className="w-[5px]" />
          <Icon n="hand" /><Icon n="zoomIn" /><Icon n="zoomOut" />
          <Sep className="w-[3px]" />
          <Icon n="globe" />
          <Sep className="w-[5px]" />
          <Icon n="bino" /><Icon n="clock" />
          <Grip className="w-[7px]" />
          <Icon n="xa" /><Icon n="xb" /><Icon n="gb2" /><Icon n="tri2" /><Icon n="boxA" /><Icon n="boxB" /><Icon n="yx" /><Icon n="triF" /><Icon n="ruler2" />
        </div>

        <div className="h-px shrink-0 bg-[#8e9ba6]" />

        <div className="flex min-h-0 flex-1">
          <Properties />
          <div className="flex min-w-0 flex-1 flex-col border-l-2 border-[#7d94a6] pl-px">
            <div className="flex h-[19px] shrink-0 items-end border-b border-[#8e9ba6] pl-[2px]">
              <div className="flex h-[13px] items-center border-r border-[#a8a8a8] pr-[2px]">
                <svg width="11" height="11" viewBox="0 0 14 14">
                  <rect x="1" y="2" width="12" height="11" fill="#eebb33" stroke="#a87a20" />
                  <rect x="7" y="7" width="5" height="5" fill="#c83020" />
                </svg>
                <span className="ml-[2px] text-[8px] text-[#222]">Innovyze Washoff</span>
              </div>
            </div>
            <GeoPlan />
            <div className="h-[2px] shrink-0 bg-[#7d94a6]" />
            <div className="flex min-h-0 flex-1 overflow-hidden">
              <JobControl />
              <Output />
            </div>
          </div>
        </div>
      </div>

      <div className="h-[26px] shrink-0" />
    </div>
  );
}
